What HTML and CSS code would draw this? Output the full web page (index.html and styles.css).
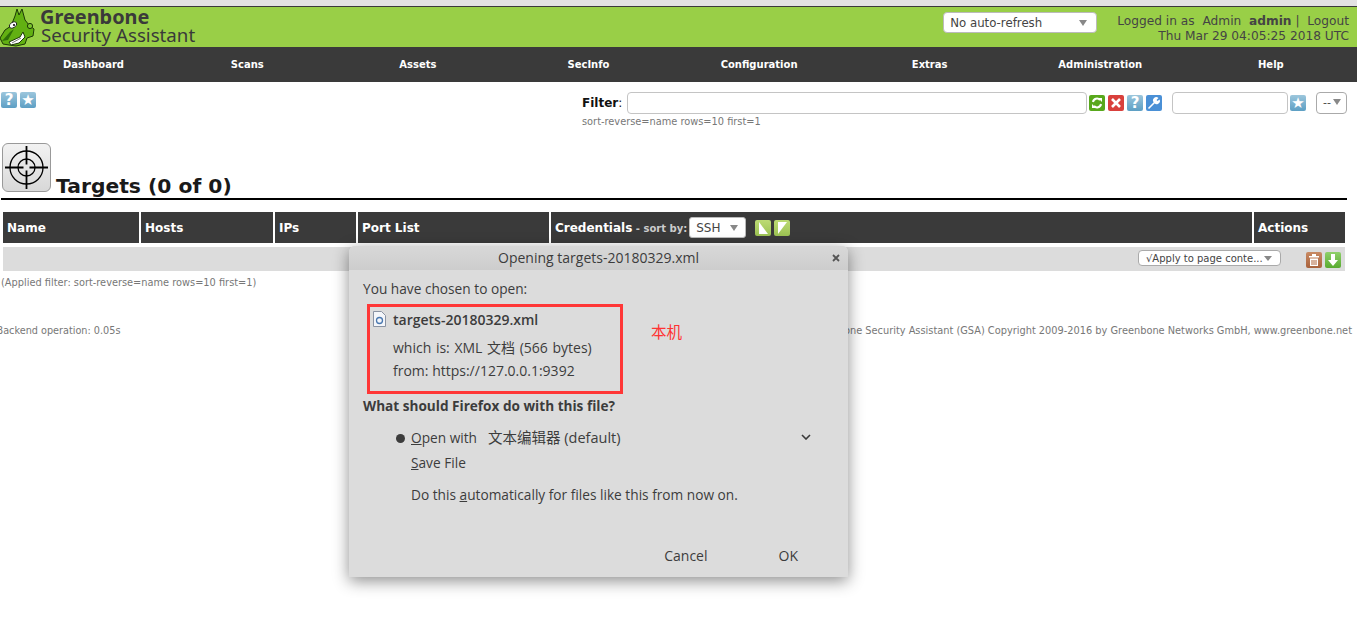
FILE: index.html
```html
<!DOCTYPE html>
<html lang="en">
<head>
<meta charset="utf-8">
<title>Targets - Greenbone Security Assistant</title>
<link rel="stylesheet" href="styles.css">
</head>
<body>
<div class="topstrip"></div>
<header class="brandbar">
  <div class="brand">
    <svg class="dragon" width="38" height="40" viewBox="0 0 38 40">
      <path d="M0 31 L5 23 L11 19 L15 9 L17 2 L19 8 L22 2 L25 13 L29 18 L34 22 L33 29 L27 31 L25 37 L16 39 L9 38 L3 37 Z" fill="#62b012" stroke="#1c3a06" stroke-width="1"/>
      <path d="M2 34 L10 25 L14 22 L8 33 Z" fill="#2f6f08"/>
      <ellipse cx="13" cy="18" rx="4" ry="2.600" fill="#fff" stroke="#111" stroke-width=".8" transform="rotate(-30 13 18)"/>
      <circle cx="14" cy="18" r="1.100" fill="#111"/>
      <path d="M9 35 L20 30 L23 25 L25 30 L19 36 L11 38 Z" fill="#fff" stroke="#1c3a06" stroke-width="1"/>
      <path d="M12 36 L21 31" stroke="#777" stroke-width="1"/>
      <circle cx="30" cy="19" r="2.600" fill="#7cc52d" stroke="#1c3a06" stroke-width="1"/>
    </svg>
    <div class="brandtext">
      <div class="brandname">Greenbone</div>
      <div class="brandsub">Security Assistant</div>
    </div>
  </div>
  <div class="brandright">
    <div class="refresh"><span>No auto-refresh</span><i class="caret"></i></div>
    <div class="session">
      <div>Logged in as&nbsp; Admin&nbsp; <b>admin</b> |&nbsp; Logout</div>
      <div>Thu Mar 29 04:05:25 2018 UTC</div>
    </div>
  </div>
</header>
<nav class="mainnav">
  <a class="nav-first">Dashboard</a><a>Scans</a><a>Assets</a><a>SecInfo</a><a>Configuration</a><a>Extras</a><a>Administration</a><a>Help</a>
</nav>
<section class="toolbar">
  <div class="tools-left">
    <span class="ico blue">?</span>
    <span class="ico blue">★</span>
  </div>
  <div class="filter">
    <div class="filter-row">
      <label class="filter-label"><b>Filter</b>:</label>
      <div class="field wide"></div>
      <div class="icons">
        <span class="ico green"><svg width="12" height="12" viewBox="0 0 12 12"><path d="M2 5a4 4 0 0 1 7-2M10 7a4 4 0 0 1-7 2" fill="none" stroke="#fff" stroke-width="2"/><path d="M7 1h4v4zM5 11H1V7z" fill="#fff"/></svg></span>
        <span class="ico red"><svg width="10" height="10" viewBox="0 0 10 10"><path d="M1 1l8 8M9 1l-8 8" stroke="#fff" stroke-width="2.600"/></svg></span>
        <span class="ico blue">?</span>
        <span class="ico azure"><svg width="14" height="14" viewBox="0 0 14 14"><path d="M1.500 12.500L8 6" stroke="#fff" stroke-width="1.600"/><path d="M7 6.500a3 3 0 0 1 4.500-4.500L9.500 4 10.500 5l2-1.500a3 3 0 0 1-5.500 3z" fill="#fff"/></svg></span>
      </div>
      <div class="field narrow"></div>
      <span class="ico blue lone">★</span>
      <div class="mini-select">--<i class="caret"></i></div>
    </div>
    <div class="filter-note">sort-reverse=name rows=10 first=1</div>
  </div>
</section>
<section class="heading">
  <div class="bigicon">
    <svg width="47" height="47" viewBox="0 0 47 47">
      <g fill="none" stroke="#000">
        <circle cx="23.500" cy="23.500" r="16.500" stroke-width="1.300"/>
        <circle cx="23.500" cy="23.500" r="8.500" stroke-width="1.300"/>
        <path d="M2 23.500h18.500M26.500 23.500H45M23.500 2v18.500M23.500 26.500V45" stroke-width="1.800"/>
      </g>
    </svg>
  </div>
  <h1>Targets (0 of 0)</h1>
</section>
<section class="grid">
  <div class="th">Name</div>
  <div class="th">Hosts</div>
  <div class="th">IPs</div>
  <div class="th">Port List</div>
  <div class="th cred"><span>Credentials</span><small> - sort by:</small>
    <div class="ssh">SSH<i class="caret"></i></div>
    <span class="ico lime first"><svg width="12" height="14" viewBox="0 0 12 14"><path d="M2 1l9 12H2z" fill="#fff"/></svg></span>
    <span class="ico lime"><svg width="12" height="14" viewBox="0 0 12 14"><path d="M11 1L2 13V1z" fill="#fff"/></svg></span>
  </div>
  <div class="th">Actions</div>
  <div class="bulk">
    <div class="apply"><span>√Apply to page conte...</span><i class="caret"></i></div>
    <span class="ico brown"><svg width="12" height="14" viewBox="0 0 12 14"><path d="M1 3h10v1.500H1zM4 1h4v2H4zM2 5.500h8V13H2z" fill="#fff"/><path d="M4 7v5M6 7v5M8 7v5" stroke="#b0643a"/></svg></span>
    <span class="ico dl"><svg width="12" height="14" viewBox="0 0 12 14"><path d="M4 1h4v6h3l-5 6-5-6h3z" fill="#fff"/></svg></span>
  </div>
</section>
<p class="applied">(Applied filter: sort-reverse=name rows=10 first=1)</p>
<footer class="foot">
  <span class="foot-left">Backend operation: 0.05s</span>
  <span>Greenbone Security Assistant (GSA) Copyright 2009-2016 by Greenbone Networks GmbH, www.greenbone.net</span>
</footer>

<div class="dialog">
  <div class="dlg-title"><span>Opening targets-20180329.xml</span><svg class="dlg-close" width="8" height="8" viewBox="0 0 8 8"><path d="M1 1l6 6M7 1l-6 6" stroke="#555" stroke-width="1.800"/></svg></div>
  <div class="dlg-body">
    <div class="chosen">You have chosen to open:</div>
    <div class="filebox">
      <div class="fname">
        <svg width="13" height="16" viewBox="0 0 13 16"><path d="M.5.500h8l4 4v11H.5z" fill="#f4f6fa" stroke="#8a93a3"/><circle cx="6.500" cy="9.500" r="3" fill="none" stroke="#4a78b0" stroke-width="1.300"/></svg>
        <b>targets-20180329.xml</b>
      </div>
      <div class="fline spaced">which is: XML 文档 (566 bytes)</div>
      <div class="fline">from: https://127.0.0.1:9392</div>
    </div>
    <div class="question">What should Firefox do with this file?</div>
    <div class="opt open"><i class="dot"></i><span><u>O</u>pen with</span><span class="app">文本编辑器 (default)</span>
      <svg class="chev" width="10" height="6" viewBox="0 0 10 6"><path d="M1 1l4 4 4-4" fill="none" stroke="#3a3a3a" stroke-width="1.600"/></svg></div>
    <div class="opt save"><span><u>S</u>ave File</span></div>
    <div class="opt auto"><span>Do this <u>a</u>utomatically for files like this from now on.</span></div>
    <div class="actions"><span>Cancel</span><span>OK</span></div>
  </div>
  <div class="note">本机</div>
</div>
</body>
</html>
```
FILE: styles.css
```css
* { box-sizing: border-box; }
html, body { margin: 0; padding: 0; }
body {
  height: 617px;
  overflow: hidden;
  background: #fff;
  position: relative;
  font-family: "DejaVu Sans", sans-serif;
  font-size: 11px;
  color: #222;
}
.topstrip { height: 6px; background: #e2e2e2; }
.brandbar {
  height: 41px;
  background: #99cf47;
  border-top: 1px solid #3a3a3a;
  display: flex;
  justify-content: space-between;
}
.brand { display: flex; }
.brandtext { margin-left: 2px; color: #3a3a3a; font-family: "Noto Sans", sans-serif; }
.brandname { font-size: 19.900px; font-weight: 700; line-height: 19px; }
.brandsub { font-size: 18.700px; line-height: 18px; margin-left: 1px; }
.brandright { display: flex; align-items: flex-start; padding-right: 8px; }
.refresh {
  width: 154px; height: 21px; margin-top: 5px;
  background: #fff; border: 1px solid #bbb; border-radius: 4px;
  display: flex; align-items: center; justify-content: space-between;
  padding: 0 9px 0 6px;
  font-size: 11.750px; color: #444;
}
.caret {
  display: inline-block; width: 0; height: 0;
  border-left: 4.500px solid transparent; border-right: 4.500px solid transparent;
  border-top: 6px solid #888;
}
.session { margin-left: 20px; text-align: right; font-size: 12.200px; line-height: 15px; color: #444; padding-top: 7px; }
.mainnav {
  height: 35px; background: #3a3a3a;
  display: grid; grid-template-columns: 162px repeat(7, 170.600px);
  align-items: center;
}
.mainnav a { text-align: center; color: #fff; font-size: 10px; font-weight: 700; }
.mainnav .nav-first { text-align: left; padding-left: 63px; }
.toolbar { display: flex; height: 61px; padding: 10px 10px 0 1px; justify-content: space-between; }
.tools-left { display: flex; gap: 3px; }
.ico {
  width: 16px; height: 16px; border-radius: 2px;
  display: inline-flex; align-items: center; justify-content: center;
  color: #fff; font-weight: 700; font-size: 15px; line-height: 1; flex: none;
}
.blue { background: linear-gradient(#9cc6dc, #5d9fc4); }
.green { background: #58a81c; }
.red { background: #d9403c; }
.azure { background: #4a90d6; }
.lime { background: linear-gradient(#bddb74, #9cc253); }
.brown { background: linear-gradient(#c88a63, #a9623c); }
.dl { background: linear-gradient(#8fd06a, #58ab30); }
.filter { width: 765px; }
.filter-row { display: flex; align-items: center; }
.filter-label { width: 45px; font-size: 12px; color: #111; }
.field { height: 22px; border: 1px solid #c4c4c4; border-radius: 4px; background: #fff; }
.wide { width: 460px; }
.narrow { width: 116px; margin-left: 10px; }
.icons { display: flex; gap: 3px; margin-left: 2px; }
.lone { margin-left: 2px; }
.mini-select {
  width: 31px; height: 22px; margin-left: 10px;
  border: 1px solid #aaa; border-radius: 4px;
  display: flex; align-items: center; justify-content: space-between;
  padding: 0 5px 2px 6px; color: #444; font-size: 11px;
}
.filter-note { font-size: 9.800px; color: #777; margin-top: 2px; line-height: 12px; }
.heading {
  display: flex; align-items: flex-end; height: 57px;
  margin-left: 1px; width: 1346px;
  border-bottom: 2px solid #000;
  padding: 0 0 1px 1px;
}
.bigicon {
  width: 49px; height: 49px; flex: none; margin-bottom: 5px;
  background: linear-gradient(#f2f2f2, #d8d8d8);
  border: 1px solid #999; border-radius: 6px;
  display: flex; align-items: center; justify-content: center;
}
h1 { margin: 0 0 0 5px; font-size: 20.300px; line-height: 22px; font-weight: 700; color: #1a1a1a; }
.grid {
  display: grid;
  grid-template-columns: 136px 132px 81px 191px 701px 91px;
  column-gap: 2px;
  margin: 12px 0 0 3px;
}
.th {
  height: 31px; background: #3a3a3a; color: #fff;
  font-size: 12px; font-weight: 700;
  display: flex; align-items: center; padding-left: 4px; white-space: pre;
}
.th small { font-size: 10px; color: #ccc; padding-top: 1px; }
.ssh {
  width: 57px; height: 21px; margin-left: 2px;
  background: #fff; border: 1px solid #bbb; border-radius: 3px;
  display: flex; align-items: center; justify-content: space-between;
  padding: 0 7px 0 6px; color: #444; font-weight: 400;
}
.first { margin-left: 9px; }
.cred .ico + .ico { margin-left: 3px; }
.bulk {
  grid-column: 1 / -1; height: 24px; margin-top: 4px;
  background: #dcdcdc;
  display: flex; align-items: center; justify-content: flex-end;
  padding-right: 4px; gap: 3px;
}
.bulk .ico { margin-top: 2px; }
.apply {
  width: 143px; height: 16px; margin: 0 22px 2px 0;
  background: #fff; border: 1px solid #aaa; border-radius: 4px;
  display: flex; align-items: center; justify-content: space-between;
  padding: 0 8px 0 7px; font-size: 10px; color: #444;
}
.apply .caret { border-left-width: 4px; border-right-width: 4px; border-top-width: 5px; }
.applied { margin: 6px 0 0 1px; font-size: 9.800px; line-height: 12px; color: #777; }
.foot {
  display: flex; justify-content: space-between;
  margin: 36px 5px 0 -3.500px;
  font-size: 9.800px; line-height: 12px; color: #777;
}
.foot-left { font-size: 9.700px; }
.dialog {
  position: absolute; left: 349px; top: 246px;
  width: 499px; height: 331px;
  background: #dcdcdc;
  border-radius: 6px 6px 0 0;
  box-shadow: 0 4px 16px rgba(0,0,0,.45);
  font-family: "Open Sans", "Noto Sans CJK SC", sans-serif;
  font-size: 13.700px; color: #3c3c3c;
}
.dlg-title {
  height: 24px; position: relative;
  background: linear-gradient(#d8d8d8, #cdcdcd);
  border-radius: 6px 6px 0 0;
  text-align: center; line-height: 24px; font-size: 14px;
}
.dlg-close { position: absolute; right: 8px; top: 8px; }
.dlg-body { padding: 9px 14px 0; }
.chosen { line-height: 20px; }
.filebox {
  width: 256px; height: 90px; margin: 5px 0 0 4px;
  border: 3px solid #ff3737;
  padding: 2px 0 0 3px;
  font-size: 14px;
}
.fname { display: flex; align-items: center; gap: 7px; height: 20px; }
.fname b { font-weight: 600; }
.fline { margin-left: 20px; line-height: 23px; }
.fname + .fline { margin-top: 7px; }
.spaced { word-spacing: 1px; }
.question { font-weight: 700; font-size: 13.600px; margin-top: 2px; line-height: 20px; }
.opt { margin-left: 48px; display: flex; align-items: center; position: relative; line-height: 20px; }
.open { margin-top: 12px; }
.save { margin-top: 5px; }
.auto { margin-top: 12px; }
.dot { position: absolute; left: -15px; top: 6px; width: 9px; height: 9px; border-radius: 50%; background: #3c3c3c; }
.app { margin-left: 11px; font-size: 14.500px; }
.chev { position: absolute; left: 390px; top: 6px; }
.actions { display: flex; justify-content: flex-end; gap: 71px; margin: 41px 36px 0 0; line-height: 20px; font-size: 14px; }
.note {
  position: absolute; left: 302px; top: 75px;
  color: #f33; font-family: "Noto Sans CJK SC", sans-serif; font-size: 15.500px; line-height: 20px;
}
```
